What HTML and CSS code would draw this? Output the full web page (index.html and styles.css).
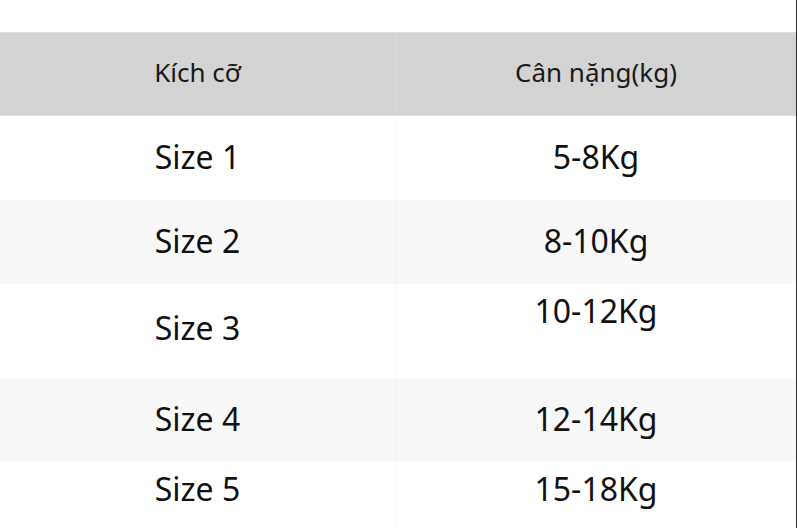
FILE: index.html
```html
<!DOCTYPE html>
<html lang="vi">
<head>
<meta charset="utf-8">
<title>Bảng size</title>
<link rel="stylesheet" href="styles.css">
</head>
<body>
<div class="page">
  <div class="table">
    <div class="row head">
      <div class="cell">Kích cỡ</div>
      <div class="cell">Cân nặng(kg)</div>
    </div>
    <div class="row">
      <div class="cell">Size 1</div>
      <div class="cell">5-8Kg</div>
    </div>
    <div class="row alt">
      <div class="cell">Size 2</div>
      <div class="cell">8-10Kg</div>
    </div>
    <div class="row tall">
      <div class="cell">Size 3</div>
      <div class="cell top">10-12Kg</div>
    </div>
    <div class="row alt">
      <div class="cell">Size 4</div>
      <div class="cell">12-14Kg</div>
    </div>
    <div class="row last">
      <div class="cell top">Size 5</div>
      <div class="cell top">15-18Kg</div>
    </div>
  </div>
</div>
</body>
</html>
```
FILE: styles.css
```css
html, body {
  margin: 0;
  padding: 0;
  background: #ffffff;
  overflow: hidden;
}

body {
  font-family: "Noto Sans", "Open Sans", sans-serif;
  color: #111111;
}

.page {
  width: 797px;
  height: 528px;
  border-right: 1px solid #2b2b2b;
  overflow: hidden;
  padding-top: 32px;
  box-sizing: border-box;
}

.table {
  display: flex;
  flex-direction: column;
}

.row {
  display: grid;
  grid-template-columns: 395px 401px;
  height: 84px;
  flex-shrink: 0;
  font-size: 32px;
  line-height: 1.362;
}

.row .cell {
  display: flex;
  align-items: center;
  justify-content: center;
  padding-bottom: 3px;
}

.row .cell + .cell {
  border-left: 1px solid rgba(0, 0, 0, 0.02);
}

.row .cell.top {
  align-items: flex-start;
  padding-top: 5px;
  padding-bottom: 0;
}

.head {
  background: #d3d3d3;
  font-size: 26px;
  color: #1a1a1a;
  border-top: 1px solid #dddddd;
  border-bottom: 1px solid #dddddd;
  box-sizing: border-box;
}

.head .cell + .cell {
  border-left: 1px solid #dadada;
}

.head .cell {
  padding-bottom: 2px;
}

.alt {
  background: #f8f8f8;
}

.tall {
  height: 94px;
}

.tall .cell {
  padding-bottom: 6px;
}
```
